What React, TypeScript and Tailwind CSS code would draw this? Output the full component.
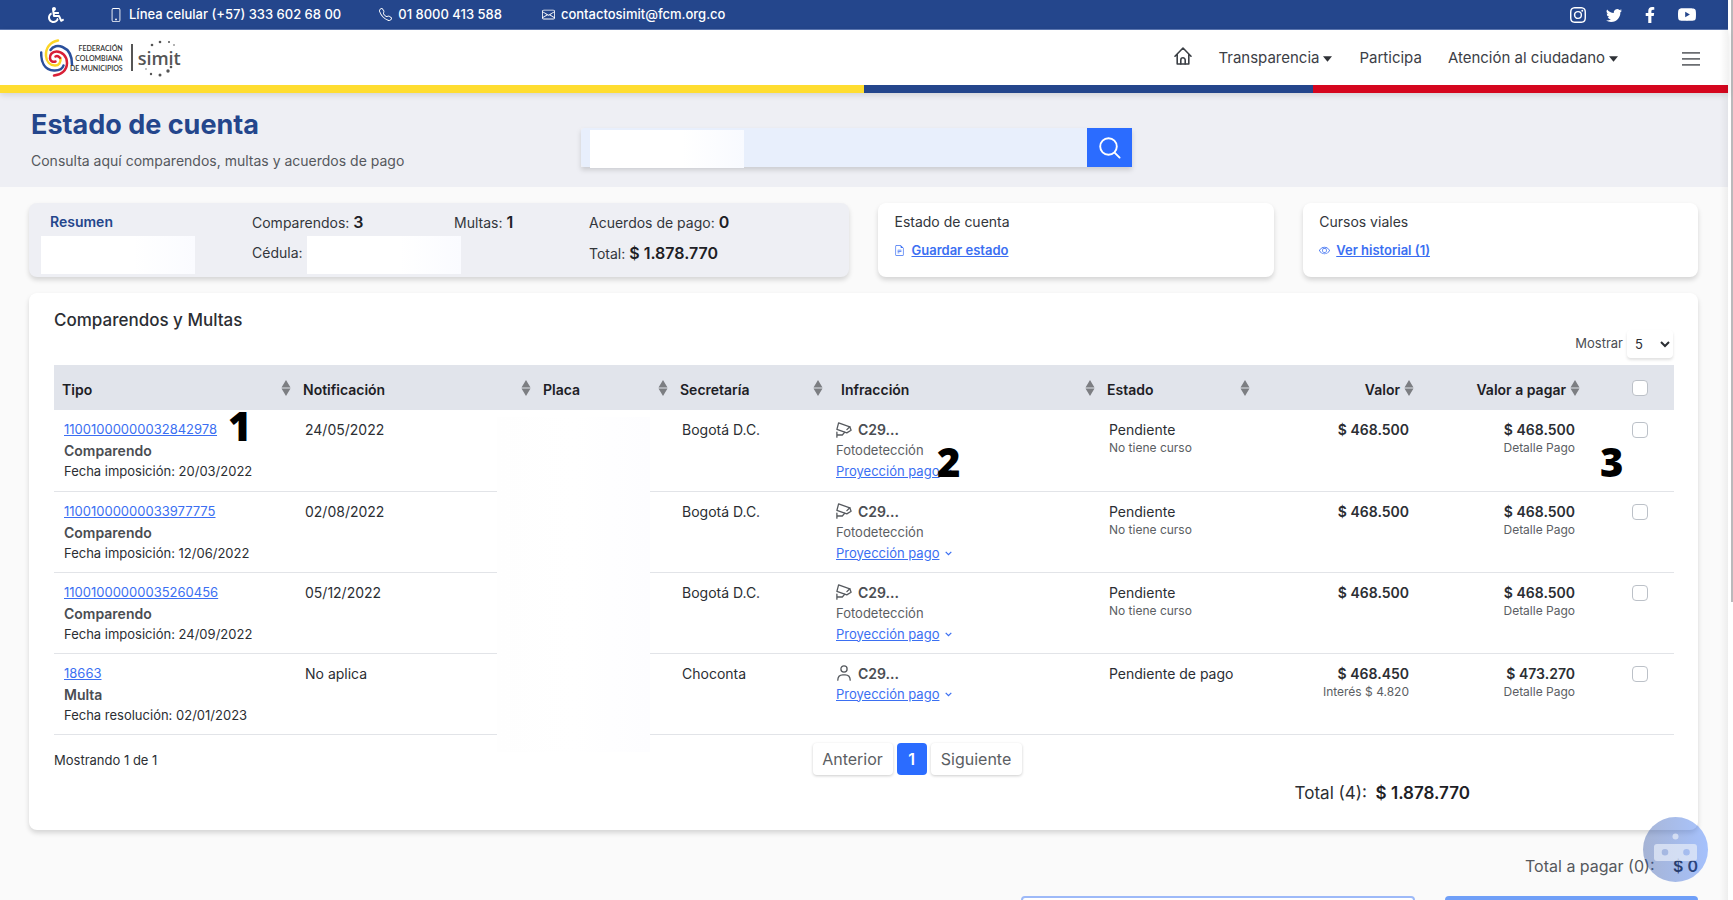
import { useState } from 'react'
import {
  BsEnvelope,
  BsEye,
  BsFileEarmarkText,
  BsInstagram,
  BsPhone,
  BsTelephone,
  BsTwitter,
  BsYoutube,
} from 'react-icons/bs'
import { FaFacebookF, FaWheelchair } from 'react-icons/fa'

interface Multa {
  id: string
  tipo: string
  fecha: string
  notificacion: string
  secretaria: string
  foto: boolean
  estado: string
  curso?: string
  valor: string
  interes?: string
  pagar: string
}

const MULTAS: Multa[] = [
  {
    id: '11001000000032842978',
    tipo: 'Comparendo',
    fecha: 'Fecha imposición: 20/03/2022',
    notificacion: '24/05/2022',
    secretaria: 'Bogotá D.C.',
    foto: true,
    estado: 'Pendiente',
    curso: 'No tiene curso',
    valor: '$ 468.500',
    pagar: '$ 468.500',
  },
  {
    id: '11001000000033977775',
    tipo: 'Comparendo',
    fecha: 'Fecha imposición: 12/06/2022',
    notificacion: '02/08/2022',
    secretaria: 'Bogotá D.C.',
    foto: true,
    estado: 'Pendiente',
    curso: 'No tiene curso',
    valor: '$ 468.500',
    pagar: '$ 468.500',
  },
  {
    id: '11001000000035260456',
    tipo: 'Comparendo',
    fecha: 'Fecha imposición: 24/09/2022',
    notificacion: '05/12/2022',
    secretaria: 'Bogotá D.C.',
    foto: true,
    estado: 'Pendiente',
    curso: 'No tiene curso',
    valor: '$ 468.500',
    pagar: '$ 468.500',
  },
  {
    id: '18663',
    tipo: 'Multa',
    fecha: 'Fecha resolución: 02/01/2023',
    notificacion: 'No aplica',
    secretaria: 'Choconta',
    foto: false,
    estado: 'Pendiente de pago',
    valor: '$ 468.450',
    interes: 'Interés $ 4.820',
    pagar: '$ 473.270',
  },
]

const CARD = 'rounded-lg shadow-[0_3px_5px_rgba(0,0,0,0.15)]'
const CHECK =
  'block size-4 appearance-none rounded border border-[#bcc1c8] bg-white checked:bg-[#2b6cff]'
const STEP =
  "absolute font-['Open_Sans',sans-serif] text-[40px] leading-[44px] font-extrabold text-black"

function SortIcon() {
  return (
    <svg viewBox="0 0 10 16" className="mb-1 h-4 w-[10px] shrink-0" fill="#7c7e82" aria-hidden>
      <path d="M5 0 9.500 7.400H.5zM5 16 9.500 8.600H.5z" />
    </svg>
  )
}

function Caret() {
  return (
    <svg viewBox="0 0 10 6" className="ml-1 h-[6px] w-[9px]" fill="#2f3237" aria-hidden>
      <path d="M0 0h10L5 6z" />
    </svg>
  )
}

function HomeIcon() {
  return (
    <svg viewBox="0 0 18 18" className="size-[18px]" fill="none" stroke="#3c4046" strokeWidth="1.600" strokeLinecap="round" strokeLinejoin="round" aria-hidden>
      <path d="M1 9.200 9 1l8 8.200M3.200 7.500V17h11.600V7.500" />
      <path d="M6.800 17v-4a2.200 2.200 0 0 1 4.400 0v4" />
    </svg>
  )
}

// Cámara de fotodetección
function CameraIcon() {
  return (
    <svg viewBox="0 0 16 16" className="size-4" fill="none" stroke="#55595e" strokeWidth="1.300" strokeLinecap="round" strokeLinejoin="round" aria-hidden>
      <path d="M2.600.9 13.800 4.800l1.300 3.400-4.300 2.700L.9 7.400z" />
      <path d="M13.800 4.800 10.900 7.600M8.600 10.300 6.300 13H.9M.9 10.200v5" />
    </svg>
  )
}

function PersonIcon() {
  return (
    <svg viewBox="0 0 16 16" className="size-4" fill="none" stroke="#55595e" strokeWidth="1.300" strokeLinecap="round" aria-hidden>
      <circle cx="8" cy="4" r="3.100" />
      <path d="M1.800 15.200c0-3.400 2.200-5.400 5-5.400h2.400c2.800 0 5 2 5 5.400" />
    </svg>
  )
}

function Logo() {
  return (
    <div className="flex items-center">
      <svg viewBox="0 0 34 38" className="h-[38px] w-[34px]" fill="none" strokeWidth="2.500" strokeLinecap="round" aria-hidden>
        <path d="M18 1.500C10 3 5.500 9 6 17c.5 6 4 9.500 9 9.500 4 0 6-3 5.500-7.500" stroke="#fcd526" />
        <path d="M1.200 13.500C1 22 4 31 14 31.500c5 .2 8.500-1.500 9.500-5" stroke="#2a4f9c" />
        <path d="M10.500 11C13 7 18 6 22.500 8c6 2.500 9.500 9 9.500 17.500" stroke="#2a4f9c" />
        <path d="M14 36.600c7-.6 13-5 13-12.600 0-7-5-11.500-10.500-11.500-4.500 0-7 3.500-6.500 7 .4 2.500 2.800 4 5.500 3" stroke="#d81f36" />
        <path d="M15.500 17.500c1.500-1 3.500-.3 4.500 1.500" stroke="#d81f36" />
      </svg>
      <div className="-ml-1 text-right font-[Lato,sans-serif] text-[7px] leading-[10px] font-semibold text-[#333]">
        <div>FEDERACIÓN</div>
        <div>COLOMBIANA</div>
        <div>DE MUNICIPIOS</div>
      </div>
      <div className="mr-[5px] ml-2 h-[27px] w-[2px] bg-[#555]" />
      <div className="relative">
        <span className="font-['Open_Sans',sans-serif] text-lg leading-7 font-semibold text-[#555]">simit</span>
        <svg viewBox="0 0 44 38" className="absolute top-[-4px] left-0 h-[38px] w-[44px]" fill="#555" aria-hidden>
          <circle cx="14" cy="5" r="1.300" />
          <circle cx="22" cy="2" r="1.300" />
          <circle cx="31" cy="2" r="1" />
          <circle cx="36" cy="5" r=".8" />
          <circle cx="8" cy="29" r=".7" />
          <circle cx="13" cy="34" r="1.200" />
          <circle cx="22" cy="35" r="1.500" />
          <circle cx="30" cy="31" r="1.700" />
          <circle cx="33" cy="27" r="1.300" />
        </svg>
      </div>
    </div>
  )
}

function TopBar() {
  return (
    <div className="flex h-[30px] items-center justify-between border-b border-[#5d78b3] bg-[#24468c] pr-8 pl-12 text-[13px] font-medium text-white">
      <div className="flex items-center">
        <a href="#accesibilidad" aria-label="Accesibilidad">
          <FaWheelchair className="size-4" />
        </a>
        <a href="#celular" className="ml-[45px] flex items-center gap-[6px]">
          <BsPhone className="size-[14px]" /> Línea celular (+57) 333 602 68 00
        </a>
        <a href="#telefono" className="ml-[38px] flex items-center gap-[6px]">
          <BsTelephone className="size-[13px]" /> 01 8000 413 588
        </a>
        <a href="#correo" className="ml-10 flex items-center gap-[6px]">
          <BsEnvelope className="size-[13px]" /> contactosimit@fcm.org.co
        </a>
      </div>
      <div className="flex items-center gap-5">
        <a href="#instagram" aria-label="Instagram"><BsInstagram className="size-4" /></a>
        <a href="#twitter" aria-label="Twitter"><BsTwitter className="size-4" /></a>
        <a href="#facebook" aria-label="Facebook"><FaFacebookF className="size-4" /></a>
        <a href="#youtube" aria-label="YouTube"><BsYoutube className="size-[18px]" /></a>
      </div>
    </div>
  )
}

function Header() {
  return (
    <header className="relative shadow-[0_2px_6px_rgba(0,0,0,0.12)]">
      <div className="flex h-[55px] items-center justify-between bg-white pr-7 pl-10">
        <Logo />
        <nav className="flex items-center pt-[2px] text-[15px] text-[#3c4046]">
          <a href="#inicio" aria-label="Inicio" className="mr-[26px] mb-[6px]"><HomeIcon /></a>
          <a href="#transparencia" className="mr-[27px] flex items-center">Transparencia <Caret /></a>
          <a href="#participa" className="mr-[26px]">Participa</a>
          <a href="#atencion" className="mr-16 flex items-center">Atención al ciudadano <Caret /></a>
          <button type="button" aria-label="Menú">
            <svg viewBox="0 0 18 14" className="h-[14px] w-[18px]" fill="#6b6e72" aria-hidden>
              <path d="M0 0h18v1.800H0zM0 6h18v1.800H0zM0 12h18v1.800H0z" />
            </svg>
          </button>
        </nav>
      </div>
      <div className="flex h-2">
        <div className="w-1/2 bg-[#ffdd30]" />
        <div className="w-[26%] bg-[#24468c]" />
        <div className="grow bg-[#d5061e]" />
      </div>
    </header>
  )
}

function Hero() {
  return (
    <section className="flex h-[94px] items-start bg-[#eeeff4] pl-[31px]">
      <div className="w-[550px] pt-4">
        <h1 className="text-[27px] leading-8 font-bold text-[#24468c]">Estado de cuenta</h1>
        <p className="mt-2 text-sm leading-6 text-[#55585d]">Consulta aquí comparendos, multas y acuerdos de pago</p>
      </div>
      <form className="relative mt-[35px] flex h-[39px] w-[551px] shadow-[0_3px_5px_rgba(0,0,0,0.15)]" onSubmit={(e) => e.preventDefault()}>
        <input aria-label="Número de identificación o placa" className="min-w-0 grow rounded-l bg-[#e8effc]" />
        <span className="absolute top-[2px] left-[9px] h-[38px] w-[154px] bg-linear-to-r from-white from-60% to-[#f8faff]" />
        <button type="submit" aria-label="Buscar" className="flex w-[45px] items-center justify-center bg-[#2b6cff]">
          <svg viewBox="0 0 22 22" className="size-[22px]" fill="none" stroke="#fff" strokeWidth="1.900" strokeLinecap="round" aria-hidden>
            <circle cx="9.500" cy="9.500" r="8.300" />
            <path d="m15.600 15.600 5 5" />
          </svg>
        </button>
      </form>
    </section>
  )
}

function Resumen() {
  return (
    <section className="grid grid-cols-[821fr_396fr_395fr] gap-[29px] text-sm text-[#33363b]">
      <div className={`${CARD} relative h-[74px] bg-[#eeeff4] pt-[7px] pl-[21px]`}>
        <div className="grid grid-cols-[202px_202px_135px_1fr] leading-6">
          <h2 className="font-semibold text-[#24468c]">Resumen</h2>
          <p>Comparendos: <b className="text-base font-semibold text-[#1d2025]">3</b></p>
          <p>Multas: <b className="text-base font-semibold text-[#1d2025]">1</b></p>
          <p>Acuerdos de pago: <b className="text-base font-semibold text-[#1d2025]">0</b></p>
        </div>
        <div className="mt-[6px] grid grid-cols-[202px_337px_1fr] leading-6">
          <span />
          <p>Cédula:</p>
          <p>Total: <b className="text-base font-semibold text-[#1d2025]">$ 1.878.770</b></p>
        </div>
        <span className="absolute top-[33px] left-3 h-[38px] w-[154px] bg-linear-to-r from-white from-60% to-[#fafbff]" />
        <span className="absolute top-[33px] left-[278px] h-[38px] w-[154px] bg-linear-to-r from-white from-60% to-[#fafbff]" />
      </div>
      <div className={`${CARD} bg-white px-4 pt-[7px]`}>
        <h2 className="leading-6">Estado de cuenta</h2>
        <a href="#guardar" className="mt-1 flex items-center gap-[6px] text-[13px] leading-6 font-semibold text-[#3b6ff2]">
          <BsFileEarmarkText className="size-[11px]" />
          <span className="underline">Guardar estado</span>
        </a>
      </div>
      <div className={`${CARD} bg-white px-4 pt-[7px]`}>
        <h2 className="leading-6">Cursos viales</h2>
        <a href="#historial" className="mt-1 flex items-center gap-[6px] text-[13px] leading-6 font-semibold text-[#3b6ff2]">
          <BsEye className="size-[11px]" />
          <span className="underline">Ver historial (1)</span>
        </a>
      </div>
    </section>
  )
}

function Th({ label, inset }: { label: string; inset?: boolean }) {
  return (
    <th className={`pt-1 pr-1 text-left font-semibold ${inset ? 'pl-[14px]' : 'pl-2'}`}>
      <div className="flex items-center justify-between">
        {label}
        <SortIcon />
      </div>
    </th>
  )
}

function MultaRow({ multa, checked, onToggle }: { multa: Multa; checked: boolean; onToggle: () => void }) {
  return (
    <tr className="h-[81px] border-b border-[#e2e4e8] align-top">
      <td className="pt-[9px] pl-[10px]">
        <a href={`#${multa.id}`} className="block text-[13px] text-[#3b6ff2] underline">{multa.id}</a>
        <div className="font-semibold text-[#4a4d52]">{multa.tipo}</div>
        <div className="text-[13px]">{multa.fecha}</div>
      </td>
      <td className="pt-[9px] pl-[10px]">{multa.notificacion}</td>
      <td />
      <td className="pt-[9px] pl-[10px]">{multa.secretaria}</td>
      <td className="pt-[9px] pl-[9px]">
        <div className="flex items-center gap-[6px] font-semibold text-[#4a4d52]">
          {multa.foto ? <CameraIcon /> : <PersonIcon />}
          C29...
        </div>
        {multa.foto && <div className="text-[13px] text-[#5b5e63]">Fotodetección</div>}
        <a href="#proyeccion" className="flex items-center gap-[6px] text-[13px] text-[#3b6ff2]">
          <span className="underline">Proyección pago</span>
          <svg viewBox="0 0 8 5" className="h-[5px] w-[7px]" fill="none" stroke="currentColor" strokeWidth="1.400" aria-hidden>
            <path d="M.8.600 4 3.900 7.200.6" />
          </svg>
        </a>
      </td>
      <td className="pt-[9px] pl-[10px]">
        {multa.estado}
        <div className="text-xs leading-4 text-[#5b5e63]">{multa.curso}</div>
      </td>
      <td className="pt-[9px] pr-[9px] text-right font-semibold">
        {multa.valor}
        <div className="text-xs leading-4 font-normal text-[#5b5e63]">{multa.interes}</div>
      </td>
      <td className="pt-[9px] pr-[9px] text-right font-semibold">
        {multa.pagar}
        <div className="text-xs leading-4 font-normal text-[#5b5e63]">Detalle Pago</div>
      </td>
      <td className="pt-3 pl-12">
        <input type="checkbox" aria-label={`Seleccionar ${multa.id}`} checked={checked} onChange={onToggle} className={CHECK} />
      </td>
    </tr>
  )
}

function Tabla() {
  const [selected, setSelected] = useState<string[]>([])

  function toggle(id: string) {
    setSelected((s) => (s.includes(id) ? s.filter((x) => x !== id) : [...s, id]))
  }

  return (
    <section className={`${CARD} mt-4 bg-white px-[25px] pt-[13px] pb-[25px] text-[#2b2e33]`}>
      <h2 className="text-[17px] leading-7 font-medium">Comparendos y Multas</h2>
      <div className="-mt-1 flex h-7 items-center justify-end gap-1 text-[13px]">
        <label htmlFor="mostrar" className="text-[#4a4d52]">Mostrar</label>
        <select id="mostrar" className="h-7 w-[46px] rounded bg-white pl-1 shadow-[0_2px_3px_rgba(0,0,0,0.12)]">
          <option>5</option>
          <option>10</option>
        </select>
      </div>
      <div className="relative mt-[7px]">
        <table className="w-full table-fixed text-sm leading-[21px]">
          <colgroup>
            <col className="w-[241px]" />
            <col className="w-[240px]" />
            <col className="w-[137px]" />
            <col className="w-[155px]" />
            <col className="w-[272px]" />
            <col className="w-[155px]" />
            <col className="w-[164px]" />
            <col className="w-[166px]" />
            <col className="w-[90px]" />
          </colgroup>
          <thead>
            <tr className="h-[45px] bg-[#e1e4eb] text-[#1d2025]">
              <Th label="Tipo" />
              <Th label="Notificación" />
              <Th label="Placa" />
              <Th label="Secretaría" />
              <Th label="Infracción" inset />
              <Th label="Estado" />
              <th className="pt-1 pr-1 font-semibold">
                <div className="flex items-center justify-end gap-1">Valor <SortIcon /></div>
              </th>
              <th className="pt-1 pr-1 font-semibold">
                <div className="flex items-center justify-end gap-1">Valor a pagar <SortIcon /></div>
              </th>
              <th className="pl-12">
                <input
                  type="checkbox"
                  aria-label="Seleccionar todos"
                  checked={selected.length === MULTAS.length}
                  onChange={(e) => setSelected(e.target.checked ? MULTAS.map((m) => m.id) : [])}
                  className={CHECK}
                />
              </th>
            </tr>
          </thead>
          <tbody>
            {MULTAS.map((m) => (
              <MultaRow key={m.id} multa={m} checked={selected.includes(m.id)} onToggle={() => toggle(m.id)} />
            ))}
          </tbody>
        </table>
        {/* placa oculta */}
        <div className="absolute top-[52px] left-[443px] h-[335px] w-[153px] bg-linear-to-r from-[#fefefe] via-white to-[#fdfdff]" />
        {/* pasos numerados sobre la tabla */}
        <span className={`${STEP} top-[39px] left-[174px]`}>1</span>
        <span className={`${STEP} top-[75px] left-[883px]`}>2</span>
        <span className={`${STEP} top-[75px] left-[1546px]`}>3</span>
      </div>
      <div className="mt-2 grid grid-cols-[759fr_861fr] items-center">
        <p className="pt-1 text-[13px]">Mostrando 1 de 1</p>
        <div className="flex gap-1 text-base text-[#5b5e63]">
          <button type="button" className="h-8 w-20 rounded bg-white shadow-[0_1px_3px_rgba(0,0,0,0.2)]">Anterior</button>
          <button type="button" className="h-8 w-[30px] rounded bg-[#2b6cff] font-semibold text-white">1</button>
          <button type="button" className="h-8 w-[91px] rounded bg-white shadow-[0_1px_3px_rgba(0,0,0,0.2)]">Siguiente</button>
        </div>
      </div>
      <p className="mt-[6px] pr-[203px] text-right text-[17px] leading-6">
        Total (4): <b className="ml-1 font-semibold text-[#1d2025]">$ 1.878.770</b>
      </p>
    </section>
  )
}

export default function App() {
  return (
    <div className="flex h-screen overflow-hidden bg-[#fafafa] font-[Inter,sans-serif]">
      <div className="relative min-w-0 grow">
        <TopBar />
        <Header />
        <Hero />
        <main className="pt-4 pr-[30px] pl-[29px]">
          <Resumen />
          <Tabla />
          <p className="mt-6 text-right text-base leading-6 text-[#55585d]">
            Total a pagar (0): <b className="ml-[14px] font-semibold text-[#1d2025]">$ 0</b>
          </p>
          <div className="mt-[18px] flex justify-end gap-[30px]">
            <button type="button" aria-label="Volver" className="h-10 w-[394px] rounded border-2 border-[#9db9f8] bg-white" />
            <button type="button" aria-label="Pagar" className="h-10 w-[253px] rounded bg-[#6f9ff8]" />
          </div>
        </main>
        <button type="button" aria-label="Asistente virtual" className="absolute right-5 bottom-[18px] size-[65px] rounded-full bg-linear-to-r from-[#274a9c]/40 to-[#3d7bff]/45">
          <svg viewBox="0 0 65 65" className="size-[65px]" fill="#e3e9f7" fillOpacity=".75" aria-hidden>
            <circle cx="32.500" cy="19.500" r="3" />
            <path fillRule="evenodd" d="M14 27h37a3 3 0 0 1 3 3v11a3 3 0 0 1-3 3H14a3 3 0 0 1-3-3V30a3 3 0 0 1 3-3zM22 32a3.300 3.300 0 1 0 0 6.600 3.300 3.300 0 0 0 0-6.600zM43.500 32a3.300 3.300 0 1 0 0 6.600 3.300 3.300 0 0 0 0-6.600z" />
          </svg>
        </button>
        <div className="pointer-events-none absolute inset-y-0 right-0 w-2 bg-linear-to-r from-transparent to-black/5" />
      </div>
      {/* barra de desplazamiento */}
      <div className="w-[5px] shrink-0 bg-white pl-[3px]">
        <div className="h-[602px] bg-[#b9b9bb]" />
      </div>
    </div>
  )
}
